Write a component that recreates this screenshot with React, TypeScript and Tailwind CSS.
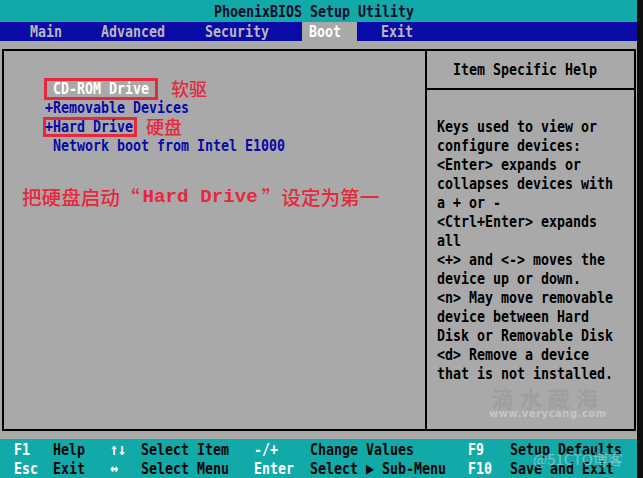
import React from "react";

const MONO = "font-['DejaVu_Sans_Mono',monospace] font-bold text-[13.29px]";
const CJK = "font-['Noto_Sans_CJK_SC',sans-serif]";

function T({ children, className = "" }: { children: React.ReactNode; className?: string }) {
  return <span className={"inline-block scale-y-125 whitespace-pre leading-[19px] " + className}>{children}</span>;
}

const help = [
  "Keys used to view or",
  "configure devices:",
  "<Enter> expands or",
  "collapses devices with",
  "a + or -",
  "<Ctrl+Enter> expands",
  "all",
  "<+> and <-> moves the",
  "device up or down.",
  "<n> May move removable",
  "device between Hard",
  "Disk or Removable Disk",
  "<d> Remove a device",
  "that is not installed.",
];

function FooterRow({ cells }: { cells: string[] }) {
  const widths = ["w-[39px]", "w-[57px]", "w-[31px]", "w-[113px]", "w-[56px]", "w-[158px]", "w-[42px]", "w-[110px]"];
  return (
    <div className="flex h-[19px] items-center pl-[14px]">
      {cells.map((c, i) => (
        <div key={i} className={widths[i] + " shrink-0 " + (i % 2 === 0 ? "text-white" : "text-[#050505]")}>
          <T>{c}</T>
        </div>
      ))}
    </div>
  );
}

export default function App() {
  return (
    <div className={"w-[643px] h-[478px] bg-[#0d0d0d] flex overflow-hidden " + MONO}>
      <div className="w-[637px] h-full flex flex-col bg-[#a9a9a9] relative">
        {/* title */}
        <div className="h-[22px] bg-[#12a9a9] flex items-center justify-center pr-[9px] text-[#0a0a2a]">
          <T>PhoenixBIOS Setup Utility</T>
        </div>
        {/* menu */}
        <div className="h-[19px] bg-[#0a0aa6] flex items-center text-[#b8b8bc]">
          <span className="ml-[30px]"><T>Main</T></span>
          <span className="ml-[39px]"><T>Advanced</T></span>
          <span className="ml-[40px]"><T>Security</T></span>
          <span className="ml-[33px] h-full w-[55px] pl-[7px] bg-[#a9a9a9] text-white flex items-center"><T>Boot</T></span>
          <span className="ml-[24px]"><T>Exit</T></span>
        </div>
        {/* body */}
        <div className="pt-[8px] pl-[2px] flex">
          <div className="w-[425px] h-[382px] border-2 border-black flex flex-col pt-[28px]">
            <div className="h-[19px] flex items-center pl-[41px]">
              <span className="h-[20px] px-[8px] flex items-center text-white outline-[3px] outline-solid outline-[#e6283c] outline-offset-[-2px]">
                <T>CD-ROM Drive</T>
              </span>
              <span className={"ml-[14px] text-[18px] leading-[19px] font-medium text-[#e6283c] " + CJK}>软驱</span>
            </div>
            <div className="h-[19px] flex items-center pl-[41px] text-[#0a0aa6]">
              <T>+Removable Devices</T>
            </div>
            <div className="h-[19px] flex items-center pl-[41px] text-[#0a0aa6]">
              <span className="h-[16px] pr-[2px] flex items-center outline-[3px] outline-solid outline-[#e6283c] outline-offset-[-1px]">
                <T>+Hard Drive</T>
              </span>
              <span className={"ml-[11px] text-[18px] leading-[19px] font-medium text-[#e6283c] " + CJK}>硬盘</span>
            </div>
            <div className="h-[19px] flex items-center pl-[49px] text-[#0a0aa6]">
              <T>Network boot from Intel E1000</T>
            </div>
            <div className="mt-[30px] h-[24px] flex items-center pl-[18px] text-[#e6283c]">
              <span className={"text-[19.6px] leading-[24px] font-medium " + CJK}>把硬盘启动“</span>
              <span className="ml-[3px] font-['Liberation_Mono',monospace] font-bold text-[19.2px] leading-[24px]">Hard Drive</span>
              <span className={"ml-[4px] text-[19.6px] leading-[24px] font-medium " + CJK}>”设定为第一</span>
            </div>
          </div>
          <div className="w-[209px] h-[382px] border-y-2 border-r-2 border-black flex flex-col relative">
            <div className="h-[39px] border-b-2 border-black flex items-center pl-[26px] text-black">
              <T>Item Specific Help</T>
            </div>
            <div className="pt-[27px] pl-[10px] flex flex-col text-black">
              {help.map((l, i) => (
                <div key={i} className="h-[19px] flex items-center">
                  <T>{l}</T>
                </div>
              ))}
            </div>
            {/* watermark */}
            <div className="absolute left-[62px] top-[334px] flex flex-col items-center opacity-60">
              <span className={"text-[22px] leading-[24px] font-bold tracking-[6px] text-[#959b9c] " + CJK}>滴水藏海</span>
              <span className="font-['DejaVu_Sans',sans-serif] text-[10px] leading-[10px] font-bold tracking-[0.5px] text-[#d8d8d8]">www.verycang.com</span>
            </div>
          </div>
        </div>
        {/* footer */}
        <div className="mt-[8px] h-[39px] bg-[#12a9a9] pt-[1px] relative">
          <FooterRow cells={["F1", "Help", "↑↓", "Select Item", "-/+", "Change Values", "F9", "Setup Defaults"]} />
          <FooterRow cells={["Esc", "Exit", "↔", "Select Menu", "Enter", "Select ▶ Sub-Menu", "F10", "Save and Exit"]} />
          <span className={"absolute left-[533px] top-[11px] text-[15px] leading-[18px] text-[#a6e0e0] opacity-60 font-normal " + CJK}>@51CTO博客</span>
        </div>
      </div>
    </div>
  );
}
